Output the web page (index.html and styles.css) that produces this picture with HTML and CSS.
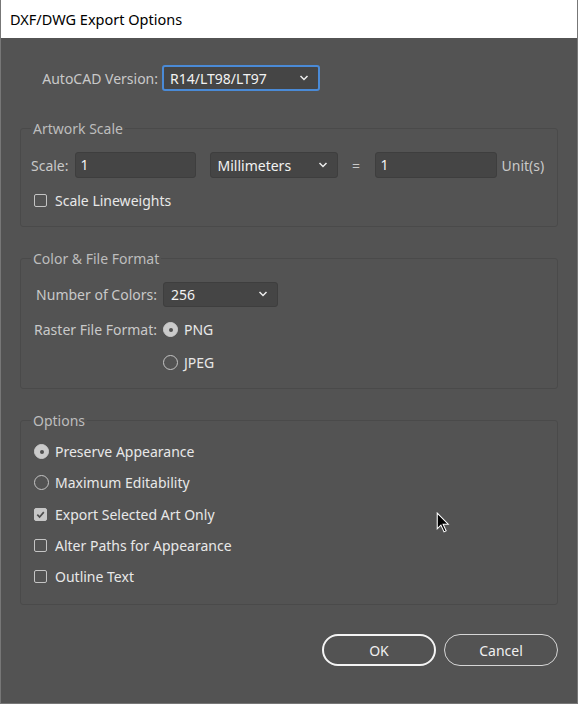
FILE: index.html
```html
<!DOCTYPE html>
<html lang="en">
<head>
<meta charset="UTF-8">
<meta name="viewport" content="width=device-width, initial-scale=1.0">
<title>DXF/DWG Export Options</title>
<link rel="stylesheet" href="styles.css">
</head>
<body>
    <div class="dialog">
        <div class="titlebar">DXF/DWG Export Options</div>

        <div class="content">
            <div class="version-row">
                <span class="label version-label">AutoCAD Version:</span>
                <div class="select select-version focused">
                    <span>R14/LT98/LT97</span>
                    <svg class="chevron" viewBox="0 0 10 6"><path d="M1.5 1 L5 4.5 L8.5 1" /></svg>
                </div>
            </div>

            <fieldset class="group group-scale">
                <legend>Artwork Scale</legend>
                <div class="scale-row">
                    <span class="label">Scale:</span>
                    <div class="field field-scale">1</div>
                    <div class="select select-units">
                        <span>Millimeters</span>
                        <svg class="chevron" viewBox="0 0 10 6"><path d="M1.5 1 L5 4.5 L8.5 1" /></svg>
                    </div>
                    <span class="label equals">=</span>
                    <div class="field field-units">1</div>
                    <span class="label">Unit(s)</span>
                </div>
                <div class="check-row">
                    <span class="checkbox"></span>
                    <span class="option-text">Scale Lineweights</span>
                </div>
            </fieldset>

            <fieldset class="group group-color">
                <legend>Color &amp; File Format</legend>
                <div class="form-row first-row">
                    <span class="label form-label">Number of Colors:</span>
                    <div class="select select-colors">
                        <span>256</span>
                        <svg class="chevron" viewBox="0 0 10 6"><path d="M1.5 1 L5 4.5 L8.5 1" /></svg>
                    </div>
                </div>
                <div class="form-row">
                    <span class="label form-label">Raster File Format:</span>
                    <span class="radio checked"></span>
                    <span class="option-text">PNG</span>
                </div>
                <div class="form-row">
                    <span class="form-label"></span>
                    <span class="radio"></span>
                    <span class="option-text">JPEG</span>
                </div>
            </fieldset>

            <fieldset class="group group-options">
                <legend>Options</legend>
                <div class="check-row">
                    <span class="radio checked"></span>
                    <span class="option-text">Preserve Appearance</span>
                </div>
                <div class="check-row">
                    <span class="radio"></span>
                    <span class="option-text">Maximum Editability</span>
                </div>
                <div class="check-row">
                    <span class="checkbox checked">
                        <svg viewBox="0 0 12 12"><path d="M2.5 6.2 L5 8.7 L9.6 3.4" /></svg>
                    </span>
                    <span class="option-text">Export Selected Art Only</span>
                </div>
                <div class="check-row">
                    <span class="checkbox"></span>
                    <span class="option-text">Alter Paths for Appearance</span>
                </div>
                <div class="check-row">
                    <span class="checkbox"></span>
                    <span class="option-text">Outline Text</span>
                </div>
            </fieldset>

            <div class="buttons">
                <button class="btn btn-default">OK</button>
                <button class="btn">Cancel</button>
            </div>
        </div>

        <!-- mouse pointer over the dialog -->
        <svg class="cursor" viewBox="0 0 13 21">
            <path d="M1 1 L1 16 L4.5 12.5 L7.5 19 L9.5 18 L6.6 11.6 L11.5 11.6 Z" />
        </svg>
    </div>
</body>
</html>
```

FILE: styles.css
```css
body {
    margin: 0;
    padding: 0;
    font-family: "Noto Sans", "Open Sans", sans-serif;
    font-size: 14px;
    background: #535353;
}

.dialog {
    position: relative;
    width: 578px;
    height: 704px;
    box-sizing: border-box;
    border: 1px solid #777;
    border-top: none;
    background: #535353;
    overflow: hidden;
}

.titlebar {
    height: 38px;
    line-height: 38px;
    background: #fff;
    color: #000;
    font-size: 14.5px;
    padding-left: 9px;
}

.content {
    padding: 0 19px;
}

.label {
    color: #c9c9c9;
}

.option-text {
    color: #e8e8e8;
}

/* верхняя строка с версией */
.version-row {
    display: flex;
    align-items: center;
    margin-top: 27px;
}

.version-label {
    width: 138px;
    text-align: right;
    margin-right: 4px;
}

.select {
    display: flex;
    align-items: center;
    justify-content: space-between;
    box-sizing: border-box;
    background: #454545;
    border: 1px solid #3e3e3e;
    border-radius: 3px;
    color: #f2f2f2;
    padding: 0 9px 0 7px;
}

.select.focused {
    border: 2px solid #4a8ad6;
    padding-left: 6px;
}

.chevron {
    width: 10px;
    height: 6px;
    fill: none;
    stroke: #eee;
    stroke-width: 1.5;
}

.select-version {
    width: 158px;
    height: 26px;
}

.group {
    margin: 0;
    border: 1px solid #4a4a4a;
    border-radius: 3px;
    padding: 0 10px;
}

.group legend {
    color: #bdbdbd;
    padding: 0 2px;
}

.group-scale {
    margin-top: 28px;
    padding-top: 14px;
    padding-bottom: 11px;
}

.scale-row {
    display: flex;
    align-items: center;
}

.field {
    box-sizing: border-box;
    height: 26px;
    line-height: 24px;
    background: #454545;
    border: 1px solid #3e3e3e;
    border-radius: 3px;
    color: #f2f2f2;
    padding-left: 5px;
}

.field-scale {
    width: 121px;
    margin-left: 6px;
}

.select-units {
    width: 128px;
    height: 26px;
    margin-left: 14px;
}

.equals {
    width: 37px;
    text-align: center;
}

.field-units {
    width: 122px;
    margin-right: 5px;
}

.check-row {
    display: flex;
    align-items: center;
    height: 31.25px;
    padding-left: 3px;
}

.group-scale .check-row {
    margin-top: 7px;
    height: 30px;
}

.checkbox {
    box-sizing: border-box;
    width: 13px;
    height: 13px;
    border: 1px solid #c4c4c4;
    border-radius: 2px;
    margin-right: 8px;
    display: flex;
    align-items: center;
    justify-content: center;
}

.checkbox.checked {
    background: #c6c6c6;
    border-color: #c6c6c6;
}

.checkbox svg {
    width: 11px;
    height: 11px;
    fill: none;
    stroke: #4c4c4c;
    stroke-width: 1.8;
}

.radio {
    box-sizing: border-box;
    width: 15px;
    height: 15px;
    border: 1px solid #c4c4c4;
    border-radius: 50%;
    margin-right: 6px;
    position: relative;
}

.radio.checked {
    background: #cbcbcb;
    border-color: #cbcbcb;
}

.radio.checked::after {
    content: "";
    position: absolute;
    left: 4.5px;
    top: 4.5px;
    width: 4px;
    height: 4px;
    border-radius: 50%;
    background: #505050;
}

.group-color {
    margin-top: 22px;
    padding-top: 7px;
    padding-bottom: 9px;
}

.form-row {
    display: flex;
    align-items: center;
    height: 33px;
}

.form-row.first-row {
    height: 38px;
}

.form-label {
    width: 126px;
    text-align: right;
    margin-right: 6px;
}

.select-colors {
    width: 115px;
    height: 25px;
}

.group-options {
    margin-top: 22px;
    padding-top: 6px;
    padding-bottom: 12px;
}

.buttons {
    display: flex;
    justify-content: flex-end;
    gap: 8px;
    margin-top: 29px;
}

.btn {
    width: 114px;
    height: 32px;
    border-radius: 16px;
    background: transparent;
    border: 1.5px solid #d6d6d6;
    color: #f0f0f0;
    font-family: "Noto Sans", "Open Sans", sans-serif;
    font-size: 14px;
    padding: 0;
}

.btn-default {
    border: 2px solid #f4f4f4;
}

.cursor {
    position: absolute;
    left: 435px;
    top: 512px;
    width: 14px;
    height: 22px;
    fill: #000;
    stroke: #fff;
    stroke-width: 1;
}
```
